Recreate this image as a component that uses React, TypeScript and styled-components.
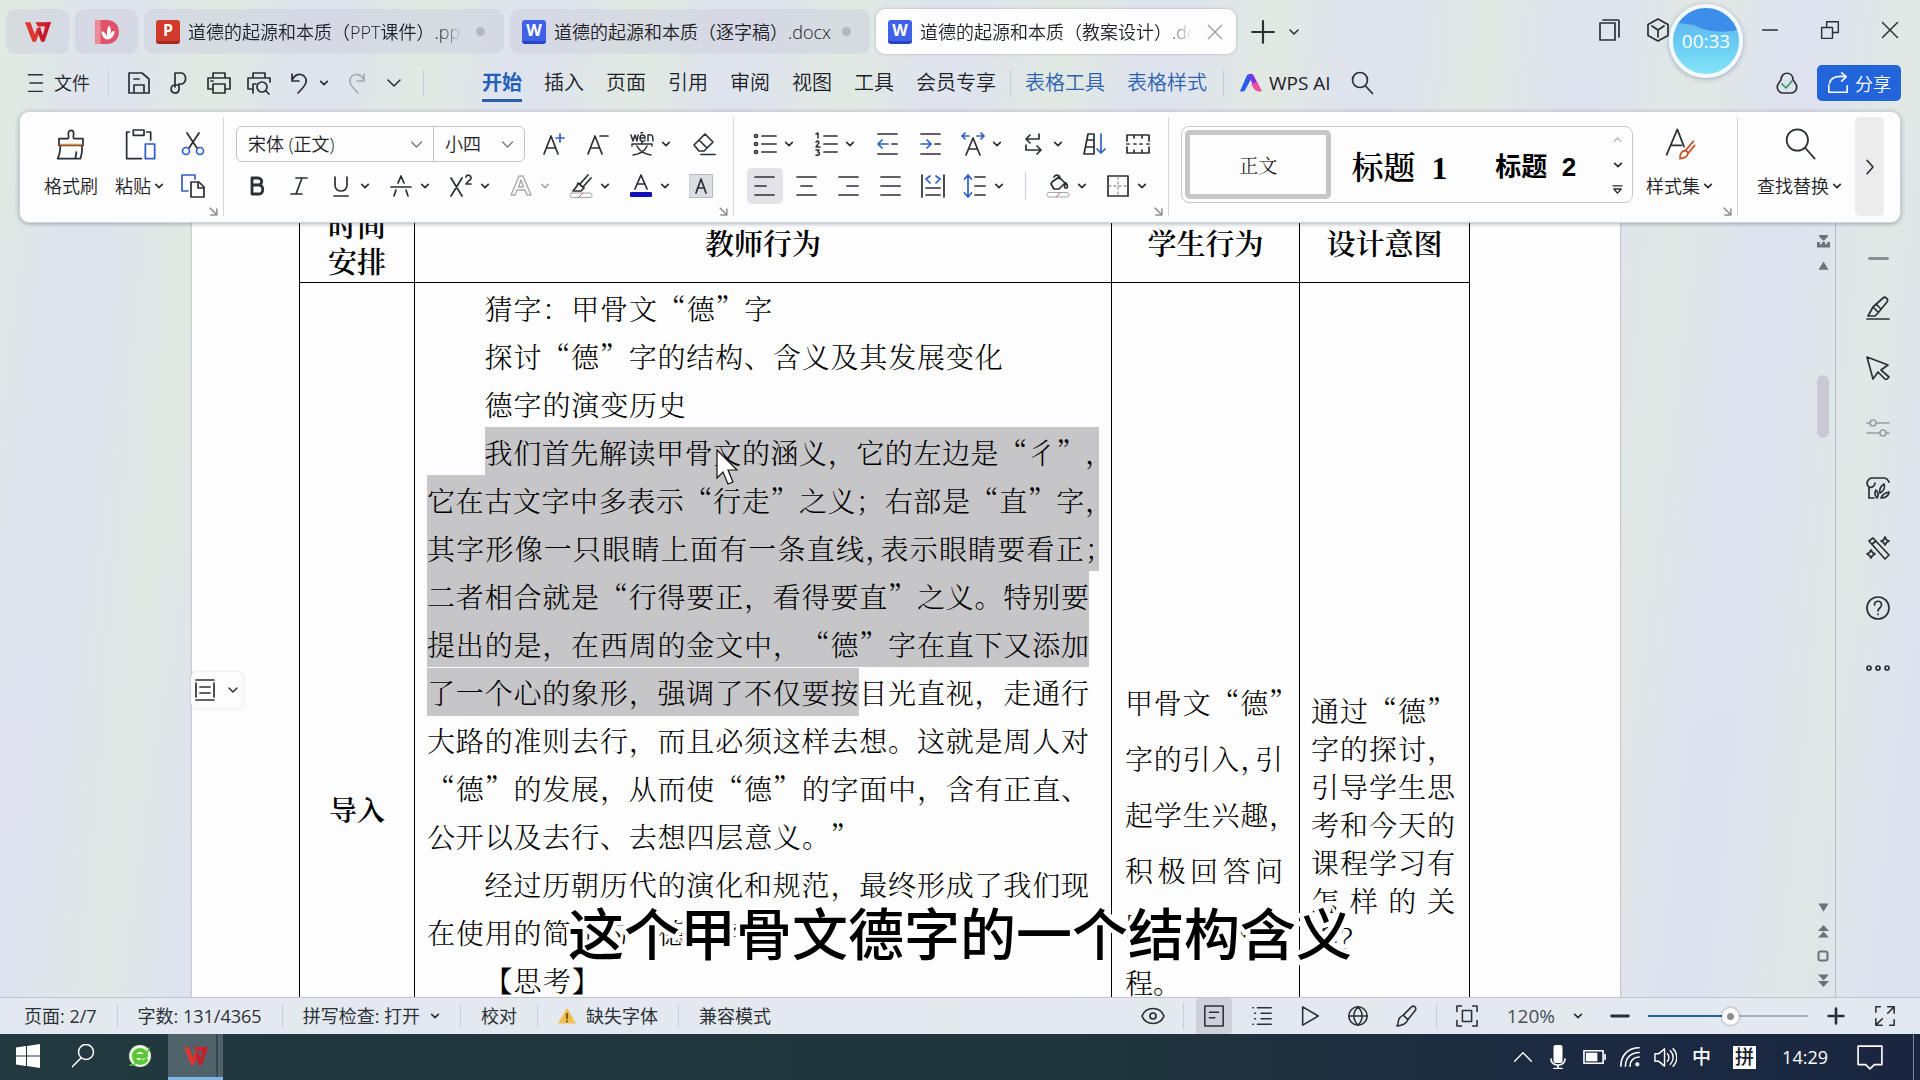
import React, { ReactNode } from "react";
import styled, { createGlobalStyle, css } from "styled-components";

const ui = `"Open Sans", "Noto Sans", "Noto Sans CJK SC", sans-serif`;
const song = `"Liberation Serif", "Noto Serif CJK SC", "Noto Sans CJK SC", serif`;
const cjk = `"Noto Serif CJK SC", "Noto Sans CJK SC", serif`;

const ink = "#2b2f36";
const blue = "#2f5fc4";
const pale = "#a9abb0";

const GlobalStyle = createGlobalStyle`
  *, *::before, *::after { box-sizing: border-box; }
  html, body, #root { height: 100%; }
  body { margin: 0; font-family: ${ui}; font-weight: 350; color: #1d2026; overflow: hidden; }
  button, input, select { font: inherit; color: inherit; }
  button { border: 0; padding: 0; background: none; cursor: pointer; }
`;

const Screen = styled.div`
  position: relative;
  display: flex;
  flex-direction: column;
  height: 100vh;
  background:
    repeating-linear-gradient(97deg, rgba(226, 238, 216, 0.35) 0 20px, rgba(221, 224, 244, 0.35) 90px 130px, rgba(226, 238, 216, 0.35) 210px),
    linear-gradient(160deg, #dfe7e8, #e0e4ec 50%, #dfe3ee);
`;

/* ---------- icons ---------- */

const Svg = styled.svg<{ $s: number; $c?: string }>`
  display: block;
  flex: none;
  width: ${(p) => p.$s}px;
  height: ${(p) => p.$s}px;
  fill: none;
  stroke: ${(p) => p.$c ?? ink};
  stroke-width: 1.7;
  stroke-linecap: round;
  stroke-linejoin: round;
`;

const Ico = ({ s = 24, c, children }: { s?: number; c?: string; children: ReactNode }) => (
  <Svg viewBox="0 0 24 24" $s={s} $c={c} aria-hidden="true">{children}</Svg>
);

const Chev = ({ s = 10, c, w = 4 }: { s?: number; c?: string; w?: number }) => (
  <Ico s={s} c={c}><path strokeWidth={w} d="M4 8l8 8 8-8" /></Ico>
);

const LogoW = ({ s = 26 }: { s?: number }) => (
  <Ico s={s} c="none">
    <path fill="#d3202f" d="M0 3h24l-1.500 4H12L9.500 3H0z" />
    <path fill="#e0342f" d="M0 3h5l4 11 2-6h4L10 21H7z" />
    <path fill="#c81c2c" d="M19.500 3H24l-6 18h-3L11.500 12l2-5 3 8z" />
  </Ico>
);

const FileBadge = styled.span<{ $c: string; $foot: string }>`
  display: grid;
  place-items: center;
  flex: none;
  width: 24px;
  height: 24px;
  border-radius: 3px;
  border-bottom: 3px solid ${(p) => p.$foot};
  background: ${(p) => p.$c};
  color: #fff;
  font-weight: 700;
  font-size: 16px;
  line-height: 20px;
`;

/* ---------- tab strip ---------- */

const TabStrip = styled.header`
  display: flex;
  align-items: center;
  gap: 6px;
  height: 63px;
  padding: 0 20px 0 6px;
`;

const tabBase = css`
  display: flex;
  align-items: center;
  height: 45px;
  border-radius: 9px;
  background: rgba(205, 208, 222, 0.55);
`;

const AppTab = styled.button`
  ${tabBase}
  flex: 0 0 63px;
  justify-content: center;
`;

const DocTab = styled.div<{ $active?: boolean }>`
  ${tabBase}
  flex: 0 1 360px;
  min-width: 0;
  gap: 8px;
  padding: 0 12px;
  ${(p) => p.$active && css`
    background: #fdfdfe;
    box-shadow: 0 0 3px rgba(90, 100, 130, 0.4);
  `}
`;

const TabTitle = styled.span<{ $fade?: boolean }>`
  flex: 1 1 0;
  min-width: 0;
  overflow: hidden;
  white-space: nowrap;
  font-size: 18px;
  line-height: 28px;
  ${(p) => p.$fade && css`mask-image: linear-gradient(90deg, #000 90%, transparent 98%);`}
`;

const Dot = styled.span`
  flex: none;
  width: 9px;
  height: 9px;
  margin-right: 7px;
  border-radius: 50%;
  background: #b4b7c4;
`;

const TabClose = styled.button`
  flex: none;
`;

const StripButtons = styled.div`
  display: flex;
  align-items: center;
  gap: 12px;
  padding-left: 8px;
`;

const WindowTools = styled.div`
  display: flex;
  align-items: center;
  margin-left: auto;
  padding-bottom: 4px;
  gap: 24px;
`;

const WindowControls = styled.div`
  display: flex;
  align-items: center;
  gap: 40px;
  margin-left: 66px;
`;

const Timer = styled.div`
  position: absolute;
  z-index: 5;
  top: 4px;
  right: 177px;
  display: grid;
  place-items: center;
  width: 74px;
  height: 74px;
  border: 4px solid #f2f8fc;
  border-radius: 50%;
  background:
    radial-gradient(ellipse 34px 16px at 74% 12%, #3d8eea 96%, transparent),
    radial-gradient(ellipse 44px 16px at 40% 2%, #3d8eea 94%, transparent),
    linear-gradient(#64b8f0 20%, #66c9f3 50%, #86e4f8);
  box-shadow: 0 1px 5px rgba(60, 90, 140, 0.45);
  color: #fff;
  font-size: 19px;
  font-weight: 400;
`;

/* ---------- menu row ---------- */

const MenuBar = styled.nav`
  display: flex;
  align-items: center;
  height: 48px;
  padding: 0 19px 8px 25px;
`;

const FileButton = styled.button`
  display: flex;
  align-items: center;
  gap: 9px;
  font-size: 18px;
  line-height: 28px;
`;

const Rule = styled.span<{ $h?: number; $m?: number }>`
  flex: none;
  width: 1px;
  height: ${(p) => p.$h ?? 26}px;
  margin: 0 ${(p) => p.$m ?? 18}px;
  background: #c9ccd6;
`;

const QuickTools = styled.div`
  display: flex;
  align-items: center;
  gap: 16px;
`;

const UndoButton = styled.button`
  display: flex;
  align-items: center;
  gap: 8px;
`;

const MenuTabs = styled.div<{ $first?: boolean }>`
  display: flex;
  align-items: center;
  gap: 22px;
  margin-left: ${(p) => (p.$first ? 38 : 0)}px;
`;

const MenuTab = styled.button<{ $kind?: "active" | "context" }>`
  height: 38px;
  border-bottom: 3px solid transparent;
  padding-top: 2px;
  font-size: 20px;
  line-height: 32px;
  white-space: nowrap;
  ${(p) => p.$kind === "active" && css`
    border-color: #2b5fae;
    color: #2460b8;
    font-weight: 700;
  `}
  ${(p) => p.$kind === "context" && css`color: #2c62ae;`}
`;

const AiButton = styled.button`
  display: flex;
  align-items: center;
  gap: 7px;
  margin-right: 19px;
  font-size: 19px;
  font-weight: 400;
`;

const MenuEnd = styled.div`
  display: flex;
  align-items: center;
  gap: 18px;
  margin-left: auto;
`;

const ShareButton = styled.button`
  display: flex;
  align-items: center;
  gap: 6px;
  height: 36px;
  padding: 0 10px;
  border-radius: 5px;
  background: #2264d9;
  color: #fff;
  font-size: 18px;
`;

/* ---------- ribbon ---------- */

const Ribbon = styled.section`
  position: relative;
  z-index: 3;
  display: flex;
  flex: none;
  height: 112px;
  margin: 0 19px;
  border: 1px solid #cfd3dc;
  border-radius: 10px;
  background: #fdfdfd;
  box-shadow: 0 1px 4px rgba(80, 90, 110, 0.45);
`;

const Group = styled.div<{ $pad: string; $gap?: number; $grow?: boolean; $last?: boolean }>`
  position: relative;
  display: flex;
  flex: ${(p) => (p.$grow ? "1 1 0" : "none")};
  gap: ${(p) => p.$gap ?? 0}px;
  min-width: 0;
  margin: 5px 0 6px;
  padding: ${(p) => p.$pad};
  border-right: ${(p) => (p.$last ? "0" : "1px solid #d5d7da")};
`;

const Rows = styled.div`
  display: grid;
  grid-auto-rows: 36px;
  row-gap: 6px;
  padding-top: 9px;
`;

const Row = styled.div<{ $gap?: number }>`
  display: flex;
  align-items: center;
  gap: ${(p) => p.$gap ?? 0}px;
`;

const Tool = styled.button<{ $active?: boolean }>`
  display: grid;
  place-items: center;
  width: 36px;
  height: 36px;
  margin: 0 3px;
  border-radius: 5px;
  background: ${(p) => (p.$active ? "#e2e2e8" : "none")};
`;

const SplitTool = styled.button`
  display: flex;
  align-items: center;
  gap: 7px;
  width: 60px;
  height: 36px;
  padding-left: 9px;
`;

const BigTool = styled.button`
  display: grid;
  grid-template-rows: 36px 36px;
  row-gap: 6px;
  place-items: center;
  padding-top: 9px;
  font-size: 18px;
  white-space: nowrap;
`;

const BigLabel = styled.span`
  display: flex;
  align-items: center;
  gap: 3px;
  line-height: 36px;
`;

const SmallStack = styled.div`
  display: grid;
  grid-template-rows: 36px 36px;
  row-gap: 6px;
  place-items: center;
  padding-top: 9px;
`;

const LauncherButton = styled.button`
  position: absolute;
  right: 5px;
  bottom: 0;
`;

const Launcher = () => (
  <LauncherButton aria-label="更多设置">
    <Ico s={9} c="#8c8f94"><path strokeWidth="4" d="M3 3l17 17M21 5v16H5" /></Ico>
  </LauncherButton>
);

const Combo = styled.div`
  display: flex;
  width: 289px;
  height: 36px;
  margin-right: 6px;
  border: 1px solid #c3c5ca;
  border-radius: 6px;
`;

const ComboField = styled.label<{ $w: number }>`
  display: flex;
  align-items: center;
  flex: 0 0 ${(p) => p.$w}px;
  padding: 0 9px 0 11px;
  & + & { border-left: 1px solid #c3c5ca; }
`;

const Select = styled.select`
  flex: 1;
  min-width: 0;
  border: 0;
  padding: 0;
  appearance: none;
  background: none;
  font-size: 18px;
  line-height: 28px;
`;

const Gallery = styled.div`
  display: flex;
  align-items: center;
  flex: 1 1 0;
  height: 77px;
  margin-top: 9px;
  padding-left: 3px;
  border: 1px solid #c6c8cc;
  border-radius: 8px;
`;

const StyleCard = styled.button<{ $kind: "body" | "h1" | "h2" }>`
  flex: 1 1 0;
  height: 69px;
  font-family: ${song};
  white-space: pre;
  color: #000;
  ${(p) => p.$kind === "body" && css`
    border: 5px solid #c6c6c6;
    border-radius: 5px;
    font-size: 19px;
    font-weight: 300;
  `}
  ${(p) => p.$kind === "h1" && css`
    font-size: 32px;
    font-weight: 600;
  `}
  ${(p) => p.$kind === "h2" && css`
    font-family: "Liberation Sans", "Noto Sans CJK SC", sans-serif;
    font-size: 26px;
    font-weight: 700;
  `}
`;

const GalleryArrows = styled.div`
  display: grid;
  grid-auto-rows: 25px;
  place-items: center;
  width: 28px;
`;

const ScrollRibbon = styled.button`
  display: grid;
  place-items: center;
  width: 29px;
  margin: 5px 16px 6px 0;
  border-radius: 5px;
  background: #ececec;
`;

/* ---------- document ---------- */

const Workspace = styled.main`
  display: flex;
  flex: 1 1 0;
  min-height: 0;
`;

const Canvas = styled.div`
  position: relative;
  flex: 1 1 0;
  min-width: 0;
  padding-left: 192px;
  overflow: hidden;
`;

const Paper = styled.article`
  width: 1428px;
  max-width: 100%;
  margin-top: -20px;
  padding: 0 151px 0 107px;
  background: #fdfdfd;
  box-shadow: 0 0 2px rgba(90, 100, 120, 0.6);
`;

const LessonTable = styled.table`
  width: 100%;
  table-layout: fixed;
  border-collapse: collapse;
  font-family: ${cjk};
  font-size: 28px;
  font-weight: 350;
  color: #000;
  text-spacing-trim: space-all;
`;

const Col = styled.col<{ $w: string }>`
  width: ${(p) => p.$w};
`;

const Th = styled.th`
  height: 79px;
  padding: 0;
  border: 1px solid #000;
  font-size: 29px;
  font-weight: 600;
  line-height: 36px;
`;

const Td = styled.td<{ $pad: string; $top?: boolean }>`
  height: 1084px;
  padding: ${(p) => p.$pad};
  border: 1px solid #000;
  vertical-align: ${(p) => (p.$top ? "top" : "middle")};
`;

const Stage = styled.div`
  font-size: 28px;
  font-weight: 600;
  text-align: center;
`;

/* The page grid holds 23 characters to a line; $chars is how many of them a short line fills. */
const Line = styled.div<{ $lh: number; $full?: boolean; $chars?: number; $indent?: boolean; $hang?: boolean; $sel?: boolean }>`
  height: ${(p) => p.$lh}px;
  width: ${(p) => (p.$chars ? `calc(100% * ${p.$chars} / 23)` : "auto")};
  margin-left: ${(p) => (p.$indent ? "calc(100% * 2 / 23)" : "0")};
  margin-right: ${(p) => (p.$hang ? -10 : 0)}px;
  line-height: ${(p) => p.$lh + 2}px;
  white-space: nowrap;
  text-align-last: ${(p) => (p.$full || p.$chars ? "justify" : "left")};
  background: ${(p) => (p.$sel ? "#c6c6c8" : "none")};
`;

const Selected = styled.span`
  padding: 4px 0;
  background: #c6c6c8;
`;

const Half = styled.span`
  font-feature-settings: "halt";
`;

const Pointer = styled.div`
  position: absolute;
  top: 226px;
  left: 715px;
`;

const LayoutHandle = styled.button`
  position: absolute;
  top: 449px;
  left: 191px;
  display: flex;
  align-items: center;
  gap: 10px;
  height: 36px;
  padding: 0 4px 0 2px;
  border-radius: 5px;
  background: #fdfdfe;
  box-shadow: 0 0 2px rgba(90, 100, 120, 0.35);
`;

const ScrollTrack = styled.div`
  display: flex;
  flex-direction: column;
  align-items: center;
  gap: 12px;
  width: 25px;
  padding: 12px 0 10px;
  border-right: 1px solid #b9bdc8;
`;

const Thumb = styled.div`
  width: 12px;
  height: 63px;
  margin: 92px 0 auto;
  border-radius: 6px;
  background: #c9cad6;
`;

const SideBar = styled.aside`
  display: flex;
  flex-direction: column;
  align-items: center;
  gap: 36px;
  width: 84px;
  padding-top: 34px;
`;

const Grip = styled.span`
  width: 21px;
  height: 3px;
  border-radius: 2px;
  background: #8b8e98;
`;

const Caption = styled.p`
  position: absolute;
  z-index: 4;
  left: 0;
  right: 0;
  bottom: 107px;
  margin: 0;
  text-align: center;
  font-family: "Noto Sans CJK SC", sans-serif;
  font-size: 56px;
  font-weight: 500;
  line-height: 84px;
  color: #000;
  -webkit-text-stroke: 9px #fdfdfd;
  paint-order: stroke fill;
  pointer-events: none;
`;

/* ---------- status bar ---------- */

const StatusBar = styled.footer`
  display: flex;
  align-items: center;
  flex: none;
  height: 37px;
  padding: 0 24px 0 4px;
  border-top: 1px solid #bfc5ce;
  background: rgba(228, 234, 240, 0.8);
  font-size: 18px;
  color: #2d3138;
`;

const StatusItem = styled.button`
  display: flex;
  align-items: center;
  gap: 10px;
  padding: 0 20px;
  line-height: 24px;
  font-weight: 400;
  white-space: nowrap;
  & + & { border-left: 1px solid #c9cdd6; }
`;

const StatusEnd = styled.div`
  display: flex;
  align-items: center;
  margin-left: auto;
`;

const ViewButton = styled.button<{ $active?: boolean }>`
  display: grid;
  place-items: center;
  width: 36px;
  height: 36px;
  margin: 0 6px;
  border-radius: 4px;
  background: ${(p) => (p.$active ? "#ced2d8" : "none")};
`;

const ZoomValue = styled.button`
  display: flex;
  align-items: center;
  gap: 18px;
  margin: 0 27px 0 16px;
  font-size: 19px;
  font-weight: 400;
  color: #4a4e56;
`;

const Slider = styled.input`
  width: 160px;
  height: 20px;
  margin: 0 19px 0 18px;
  appearance: none;
  background: linear-gradient(90deg, #2c5f9e 52%, #a9afb8 52%) center / 100% 2px no-repeat;
  &::-webkit-slider-thumb {
    appearance: none;
    width: 17px;
    height: 17px;
    border: 5px solid #fff;
    border-radius: 50%;
    background: #8c8c90;
    box-shadow: 0 0 3px rgba(0, 0, 0, 0.4);
  }
`;

const FullscreenButton = styled.button`
  margin-left: 29px;
`;

/* ---------- taskbar ---------- */

const TaskBar = styled.div`
  display: flex;
  align-items: stretch;
  flex: none;
  height: 46px;
  background: linear-gradient(90deg, #22393f, #20353c 55%, #1b2941 85%, #1a2640);
  color: #fff;
`;

const TaskButton = styled.button<{ $active?: boolean }>`
  display: grid;
  place-items: center;
  width: ${(p) => (p.$active ? 55 : 56)}px;
  border-bottom: 3px solid ${(p) => (p.$active ? "#7fb6e6" : "transparent")};
  background: ${(p) => (p.$active ? "linear-gradient(90deg, #51636a 48px, #34484f 48px 50px, #51636a 50px)" : "none")};
`;

const Tray = styled.div`
  display: flex;
  align-items: center;
  gap: 13px;
  margin-left: auto;
  padding-right: 30px;
  border-right: 1px solid #7d8596;
  margin-right: 6px;
`;

const Ime = styled.span<{ $boxed?: boolean }>`
  width: 23px;
  margin-right: 3px;
  font-size: 19px;
  font-weight: 500;
  line-height: 23px;
  text-align: center;
  ${(p) => p.$boxed && css`
    margin-left: 4px;
    background: #fff;
    color: #16202e;
  `}
`;

const Clock = styled.time`
  margin: 0 16px 0 10px;
  font-size: 18px;
  font-weight: 400;
`;

/* ---------- data ---------- */

type L = { t: ReactNode; full?: boolean; chars?: number; indent?: boolean; hang?: boolean; sel?: boolean };

const teacher: L[] = [
  { t: "猜字：甲骨文“德”字", indent: true, chars: 10 },
  { t: "探讨“德”字的结构、含义及其发展变化", indent: true, chars: 18 },
  { t: "德字的演变历史", indent: true, chars: 7 },
  { t: <>我们首先解读甲骨文的涵义，它的左边是“彳”<Half>，</Half></>, indent: true, full: true, hang: true, sel: true },
  { t: <>它在古文字中多表示“行走”之义；右部是“直”字<Half>，</Half></>, full: true, hang: true, sel: true },
  { t: <>其字形像一只眼睛上面有一条直线<Half>，</Half>表示眼睛要看正<Half>；</Half></>, full: true, hang: true, sel: true },
  { t: "二者相合就是“行得要正，看得要直”之义。特别要", full: true, sel: true },
  { t: "提出的是，在西周的金文中，“德”字在直下又添加", full: true, sel: true },
  { t: <><Selected>了一个心的象形，强调了不仅要按</Selected>目光直视，走通行</>, full: true },
  { t: "大路的准则去行，而且必须这样去想。这就是周人对", full: true },
  { t: "“德”的发展，从而使“德”的字面中，含有正直、", full: true },
  { t: "公开以及去行、去想四层意义。”", chars: 15 },
  { t: "经过历朝历代的演化和规范，最终形成了我们现", indent: true, full: true },
  { t: "在使用的简体的“德”字。", chars: 12 },
  { t: "【思考】", indent: true, chars: 4 },
];

const student: L[] = [
  { t: <>甲骨文“德<Half>”</Half></>, full: true },
  { t: <>字的引入<Half>，</Half>引</>, full: true },
  { t: <>起学生兴趣<Half>，</Half></>, full: true },
  { t: "积极回答问", full: true },
  { t: "题，进入课", full: true },
  { t: "程。" },
];

const intent: L[] = [
  { t: "通过“德”", full: true },
  { t: "字的探讨，", full: true },
  { t: "引导学生思", full: true },
  { t: "考和今天的", full: true },
  { t: "课程学习有", full: true },
  { t: "怎样的关", full: true },
  { t: "系？" },
];

const Lines = ({ items, lh = 48 }: { items: L[]; lh?: number }) => (
  <>
    {items.map((l, i) => (
      <Line key={i} $lh={lh} $full={l.full} $chars={l.chars} $indent={l.indent} $hang={l.hang} $sel={l.sel}>{l.t}</Line>
    ))}
  </>
);

const menu = ["插入", "页面", "引用", "审阅", "视图", "工具", "会员专享"];

const Split = ({ label, children, c }: { label: string; children: ReactNode; c?: string }) => (
  <SplitTool aria-label={label}>{children}<Chev c={c} /></SplitTool>
);

export default function App() {
  return (
    <Screen lang="zh-CN">
      <GlobalStyle />
      <TabStrip>
        <AppTab aria-label="WPS"><LogoW /></AppTab>
        <AppTab aria-label="稻壳">
          <Ico s={26} c="none">
            <path fill="#e0526a" d="M1 1h11c7 0 11 5 11 11s-4 11-11 11H1z" />
            <path fill="#ee8a9b" d="M1 1h5v22H1z" />
            <path fill="#fff" d="M12 19C7 17 7 13 7 11c3 1 4 3 5 5 0-4 0-8 2-10 2 3 2 5 1 8 1-2 2-3 4-3 0 4-2 7-7 8z" />
          </Ico>
        </AppTab>
        <DocTab>
          <FileBadge $c="#d23a2b" $foot="#a32a20">P</FileBadge>
          <TabTitle $fade>道德的起源和本质（PPT课件）.pptx</TabTitle>
          <Dot />
        </DocTab>
        <DocTab>
          <FileBadge $c="#3f62e8" $foot="#2747c0">W</FileBadge>
          <TabTitle>道德的起源和本质（逐字稿）.docx</TabTitle>
          <Dot />
        </DocTab>
        <DocTab $active>
          <FileBadge $c="#3f62e8" $foot="#2747c0">W</FileBadge>
          <TabTitle $fade>道德的起源和本质（教案设计）.docx</TabTitle>
          <TabClose aria-label="关闭标签"><Ico s={18} c="#999ca3"><path d="M3 3l18 18M21 3L3 21" /></Ico></TabClose>
        </DocTab>
        <StripButtons>
          <button aria-label="新建标签"><Ico s={26}><path strokeWidth="2" d="M12 2v20M2 12h20" /></Ico></button>
          <button aria-label="标签列表"><Chev s={12} w={3} /></button>
        </StripButtons>
        <WindowTools>
          <button aria-label="窗口"><Ico s={24}><path d="M2 5h15v17H2zM5 2h15a1 1 0 0 1 1 1v16" /></Ico></button>
          <button aria-label="应用"><Ico s={24}><path d="M12 1l10 5.500v11L12 23 2 17.500v-11zM6 8l6 4 6-4M12 12v7" /></Ico></button>
          <WindowControls>
            <button aria-label="最小化"><Ico s={20}><path d="M3 12h18" /></Ico></button>
            <button aria-label="还原"><Ico s={20}><path d="M2 9h13v13H2zM8 9V2h14v13h-7" /></Ico></button>
            <button aria-label="关闭"><Ico s={20}><path d="M3 3l18 18M21 3L3 21" /></Ico></button>
          </WindowControls>
        </WindowTools>
      </TabStrip>
      <Timer>00:33</Timer>

      <MenuBar>
        <FileButton>
          <Ico s={20}><path d="M4 2h17M6 12h15M4 22h17" /></Ico>
          文件
        </FileButton>
        <Rule />
        <QuickTools>
          <button aria-label="保存"><Ico><path d="M2 2h13l7 6v14H2zM7 22v-8h10v8M7 8h5" /></Ico></button>
          <button aria-label="输出"><Ico><path d="M8 16V2h7a6 6 0 0 1 0 11h-3v6a4 4 0 1 1-4-5h4" /></Ico></button>
          <button aria-label="打印"><Ico><path d="M6 7V2h12v5M5 18H1V7h22v11h-4M6 13h12v9H6zM4 10h2" /></Ico></button>
          <button aria-label="打印预览"><Ico><path d="M6 7V2h12v5M5 18H1V7h22v4M6 22V13h3" /><circle cx="15" cy="16" r="5" /><path d="M19 20l3 3" /></Ico></button>
          <UndoButton aria-label="撤销"><Ico><path d="M5 3v7h7M5 9c3-6 8-7 12-4 5 5 1 10-6 17" /></Ico><Chev /></UndoButton>
          <button aria-label="重做"><Ico c={pale}><path d="M19 3v7h-7M19 9c-3-6-8-7-12-4-5 5-1 10 6 17" /></Ico></button>
          <button aria-label="更多"><Chev s={18} w={2} /></button>
        </QuickTools>
        <Rule $m={20} />
        <MenuTabs $first>
          <MenuTab $kind="active">开始</MenuTab>
          {menu.map((m) => <MenuTab key={m}>{m}</MenuTab>)}
        </MenuTabs>
        <Rule $m={14} />
        <MenuTabs>
          <MenuTab $kind="context">表格工具</MenuTab>
          <MenuTab $kind="context">表格样式</MenuTab>
        </MenuTabs>
        <Rule $m={16} />
        <AiButton>
          <Ico s={22} c="none">
            <path fill="#2c5bf0" d="M0 21L7 5c1-3 5-4 7-1L6 19c-1 2-3 3-6 2z" />
            <path fill="#7a35e8" d="M9 3c3-2 5-1 6 1l5 10-5 2z" />
            <path fill="#ee4f9a" d="M12 13l7-2 5 10c-4 1-6 0-8-2z" />
          </Ico>
          WPS AI
        </AiButton>
        <button aria-label="搜索"><Ico><circle cx="10" cy="9" r="7.500" /><path d="M15.500 15l7 7.500" /></Ico></button>
        <MenuEnd>
          <Ico><path d="M7 22a6 6 0 0 1-3-10c0-1 1-2 2-3 0-9 12-9 12 0 1 1 2 2 2 3a6 6 0 0 1-3 10z" /><path stroke="#2f9a63" d="M7 13l4 4 6-7" /></Ico>
          <ShareButton>
            <Ico s={22} c="#fff"><path d="M2 14v8h20v-7M3 12c1-6 7-8 17-7M16 1l5 4-5 5" /></Ico>
            分享
          </ShareButton>
        </MenuEnd>
      </MenuBar>

      <Ribbon>
        <Group $pad="0 18px 0 24px" $gap={17}>
          <BigTool>
            <Ico s={32}><path strokeWidth="1.300" d="M3 8h6c2 0 1-2 1-4 0-3 4-3 4 0 0 2-1 4 1 4h6v5H3zM4 13c0 4 0 6-2 10h17c1-3 2-6 1-10M15 23c1-2 1-3 1-5" /><path stroke="#e08a3c" strokeWidth="1.300" d="M4 12.500h16" /></Ico>
            <BigLabel>格式刷</BigLabel>
          </BigTool>
          <BigTool>
            <Ico s={32}><path strokeWidth="1.300" d="M4 3H2v20h11M17 3h3v6M7 1.500h8v4H7z" /><path stroke={blue} strokeWidth="1.300" d="M16 12h7v11h-7z" /></Ico>
            <BigLabel>粘贴<Chev /></BigLabel>
          </BigTool>
          <SmallStack>
            <button aria-label="剪切"><Ico><path d="M6 1l10 15M18 1L8 16" /><circle cx="5" cy="19" r="3.500" stroke={blue} /><circle cx="19" cy="19" r="3.500" stroke={blue} /></Ico></button>
            <button aria-label="复制"><Ico><path stroke={blue} d="M7 17H1V1h13v4" /><path d="M10 8h8l5 5v10H10zM17 8v6h6" /></Ico></button>
          </SmallStack>
          <Launcher />
        </Group>

        <Group $pad="0 8px 0 12px">
          <Rows>
            <Row $gap={2}>
              <Combo>
                <ComboField $w={196}>
                  <Select aria-label="字体"><option>宋体 (正文)</option></Select>
                  <Chev s={15} w={2} c="#777" />
                </ComboField>
                <ComboField $w={91}>
                  <Select aria-label="字号"><option>小四</option></Select>
                  <Chev s={15} w={2} c="#777" />
                </ComboField>
              </Combo>
              <Tool aria-label="增大字号"><Ico><path d="M2 22L9 4l7 18M4.500 16h9" /><path stroke={blue} d="M18 2v8M14 6h8" /></Ico></Tool>
              <Tool aria-label="减小字号"><Ico><path d="M2 22L9 4l7 18M4.500 16h9M14 4h8" /></Ico></Tool>
              <Split label="拼音指南"><Ico><path strokeWidth="1.500" d="M1 3l2 6 2-6 2 6 1-6M10 6h5c0-4-5-4-5 0 0 4 4 4 5 2M11 1l2-1M18 9V3c4-1 5 0 5 6M2 14V12h20v2M12 10v2M7 14c2 4 7 8 14 9M17 14c-2 5-7 8-14 9" /></Ico></Split>
              <Tool aria-label="清除格式"><Ico><path d="M2 13L13 2l8 8-9 9H7zM7 8l8 8M9 22.500h14" /></Ico></Tool>
            </Row>
            <Row>
              <Tool aria-label="加粗"><Ico><path strokeWidth="2.800" d="M7 4h6c5 0 5 7 0 7H7zM7 11h7c5 0 5 9 0 9H7z" /></Ico></Tool>
              <Tool aria-label="倾斜"><Ico><path d="M9 4h11M4 20h11M15 4L9 20" /></Ico></Tool>
              <Split label="下划线"><Ico><path d="M6 3v8c0 8 12 8 12 0V3M5 22h14" /></Ico></Split>
              <Split label="删除线"><Ico><path d="M2 13h20M9 9l3-7 3 7M7 16l-2 6M17 16l2 6" /></Ico></Split>
              <Split label="上标"><Ico><path d="M2 4l11 18M13 4L2 22M17 3c1-3 5-2 5 1 0 2-3 3-5 6h5" /></Ico></Split>
              <Split label="文字效果" c={pale}><Ico c={pale}><path strokeWidth="1.400" d="M2 21L10 2h4l8 19h-4l-2-5H8l-2 5zM9.500 13h5L12 6z" /></Ico></Split>
              <Split label="突出显示"><Ico><path d="M19 1l-8 9M22 4l-8 9M9 9l6 5-3 3H4l4-5z" /><rect x="1" y="19" width="22" height="4.500" rx="2" stroke="#a7a7ab" strokeWidth="1" /><path stroke="#d0607a" strokeWidth="1" d="M10 23l4-4" /></Ico></Split>
              <Split label="字体颜色"><Ico><path d="M6 15L12 1l6 14M8 10h8" /><rect x="1" y="18" width="22" height="5" rx="1" fill="#1310b5" stroke="none" /></Ico></Split>
              <Tool aria-label="字符底纹"><Ico><path fill="#dcdde2" stroke="#b9bac0" strokeWidth="1" d="M.5.5h23v23H.5z" /><path d="M7 19l5-14 5 14M8.500 14h7" /></Ico></Tool>
            </Row>
          </Rows>
          <Launcher />
        </Group>

        <Group $pad="0 9px 0 10px">
          <Rows>
            <Row $gap={1}>
              <Split label="项目符号"><Ico><path d="M9 4h14M9 12h14M9 20h14" /><circle cx="3" cy="4" r="1.500" /><circle cx="3" cy="12" r="1.500" /><circle cx="3" cy="20" r="1.500" /></Ico></Split>
              <Split label="编号"><Ico><path d="M10 4h13M10 12h13M10 20h13" /><path strokeWidth="1.500" d="M2 2l2-1v5M2 10c2-2 4 0 2 2l-2 3h4M2 18h3l-1 2c3 1 1 4-2 3" /></Ico></Split>
              <Tool aria-label="减少缩进"><Ico><path d="M3 2h19M3 22h19M17 12h5" /><path stroke={blue} d="M3 12h10M7 8l-4 4 4 4" /></Ico></Tool>
              <Tool aria-label="增加缩进"><Ico><path d="M3 2h19M3 22h19M17 12h5" /><path stroke={blue} d="M3 12h10M9 8l4 4-4 4" /></Ico></Tool>
              <Split label="中文版式"><Ico><path d="M5 23l7-17 7 17M8 17h8" /><path stroke={blue} d="M1 4h7M4 1L1 4l3 3M16 4h7M20 1l3 3-3 3" /></Ico></Split>
              <Split label="换行"><Ico><path d="M17 2v5H4M8 3L4 7l4 4M4 13v5h15M15 14l4 4-4 4" /></Ico></Split>
              <Tool aria-label="排序"><Ico><path d="M1 22L5 2h6v20zM3 15h8M4 8h7" /><path stroke={blue} d="M18 2v19M14 17l4 4 4-4" /></Ico></Tool>
              <Tool aria-label="制表位"><Ico><path d="M1 9V3h22v6M1 15v6h22v-6M8 3v3M16 3v3M8 21v-3M16 21v-3M1 12h2M8 12h2M14 12h2M21 12h2" /></Ico></Tool>
            </Row>
            <Row>
              <Tool $active aria-label="左对齐"><Ico><path d="M2 3h19M2 12h11M2 21h19" /></Ico></Tool>
              <Tool aria-label="居中"><Ico><path d="M2 3h19M6 12h11M2 21h19" /></Ico></Tool>
              <Tool aria-label="右对齐"><Ico><path d="M2 3h19M10 12h11M2 21h19" /></Ico></Tool>
              <Tool aria-label="两端对齐"><Ico><path d="M2 3h19M2 12h19M2 21h19" /></Ico></Tool>
              <Tool aria-label="分散对齐"><Ico><path d="M1 1v22M23 1v22M5 14h14M5 21h14" /><path stroke={blue} d="M9 2L5 5l4 4M15 2l4 3-4 4" /></Ico></Tool>
              <Split label="行距"><Ico><path d="M12 3h10M12 12h10M12 21h10" /><path stroke={blue} d="M5 1v22M1.500 5L5 1l3.500 4M1.500 19L5 23l3.500-4" /></Ico></Split>
              <Rule $h={28} $m={11} />
              <Split label="底纹"><Ico><path d="M8 3c2-3 6-2 6 2M6 8l7-5 6 6-6 6H8L5 10zM20 9c2 3 2 5 0 5s-2-2 0-5" /><rect x="1" y="18.500" width="22" height="4.500" rx="2" stroke="#a7a7ab" strokeWidth="1" /><path stroke="#d0607a" strokeWidth="1" d="M10 23l4-4" /></Ico></Split>
              <Split label="边框"><Ico><path d="M2 2h20v20H2z" /><path stroke="#999" strokeDasharray="2 3" strokeWidth="1.300" d="M12 3v18M3 12h18" /></Ico></Split>
            </Row>
          </Rows>
          <Launcher />
        </Group>

        <Group $pad="0 24px 0 12px" $gap={13} $grow>
          <Gallery>
            <StyleCard $kind="body">正文</StyleCard>
            <StyleCard $kind="h1">标题  1</StyleCard>
            <StyleCard $kind="h2">标题  2</StyleCard>
            <GalleryArrows>
              <button aria-label="上一行"><Ico s={9} c={pale}><path strokeWidth="3" d="M3 17l9-9 9 9" /></Ico></button>
              <button aria-label="下一行"><Chev /></button>
              <button aria-label="展开"><Ico s={11}><path strokeWidth="3" d="M2 4h20M4 11l8 9 8-9z" /></Ico></button>
            </GalleryArrows>
          </Gallery>
          <BigTool>
            <Ico s={32}><path strokeWidth="1.300" d="M2 20L10 1l5 13M5 13h8" /><path stroke="#c4532c" strokeWidth="1.300" d="M22 10l-6 7M23 13l-5 6M12 23c0-4 1-6 4-6 3 1 3 5-4 6z" /></Ico>
            <BigLabel>样式集<Chev /></BigLabel>
          </BigTool>
          <Launcher />
        </Group>

        <Group $pad="0 13px 0 19px" $last>
          <BigTool>
            <Ico s={32}><circle cx="10" cy="9" r="8" strokeWidth="1.300" /><path strokeWidth="1.300" d="M16 15l7 8" /></Ico>
            <BigLabel>查找替换<Chev /></BigLabel>
          </BigTool>
        </Group>
        <ScrollRibbon aria-label="向右滚动"><Ico s={18}><path strokeWidth="2.200" d="M8 3l8 9-8 9" /></Ico></ScrollRibbon>
      </Ribbon>

      <Workspace>
        <Canvas>
          <Paper>
            <LessonTable>
              <colgroup>
                <Col $w="115px" /><Col $w="697px" /><Col $w="188px" /><Col $w="170px" />
              </colgroup>
              <thead>
                <tr>
                  <Th>时间<br />安排</Th>
                  <Th>教师行为</Th>
                  <Th>学生行为</Th>
                  <Th>设计意图</Th>
                </tr>
              </thead>
              <tbody>
                <tr>
                  <Td $pad="0 0 32px"><Stage>导入</Stage></Td>
                  <Td $pad="0 22px 0 12px" $top><Lines items={teacher} /></Td>
                  <Td $pad="32px 16px 0 13px"><Lines items={student} lh={56} /></Td>
                  <Td $pad="0 14px 4px 11px"><Lines items={intent} lh={38} /></Td>
                </tr>
              </tbody>
            </LessonTable>
          </Paper>
          <LayoutHandle aria-label="段落布局">
            <Ico><path d="M3 2h18M3 22h18M3 5v14M21 5v14M7 9h10M7 15h10" /></Ico>
            <Chev s={12} w={3} />
          </LayoutHandle>
          <Pointer>
            <Svg viewBox="0 0 24 40" $s={40} aria-hidden="true">
              <path fill="#fff" stroke="#111" strokeWidth="1.200" strokeLinejoin="miter" d="M-6 1v28l6-6 5 12 5-2-5-12h9z" />
            </Svg>
          </Pointer>
        </Canvas>
        <ScrollTrack>
          <Ico s={13} c="none"><path fill="#6d717c" d="M4 0h16v3l-8 8-8-8zM0 13h5v4h4v-4h6v4h4v-4h5v10H0z" /></Ico>
          <Ico s={11} c="none"><path fill="#6d717c" d="M12 3l11 18H1z" /></Ico>
          <Thumb />
          <Ico s={11} c="none"><path fill="#6d717c" d="M12 21L1 3h22z" /></Ico>
          <Ico s={13} c="none"><path fill="#6d717c" d="M12 0l10 11H2zM12 12l10 11H2z" /></Ico>
          <Ico s={12} c="#6d717c"><rect x="3" y="3" width="18" height="18" rx="4" strokeWidth="4" /></Ico>
          <Ico s={13} c="none"><path fill="#6d717c" d="M12 12L2 1h20zM12 24L2 13h20z" /></Ico>
        </ScrollTrack>
        <SideBar>
          <Grip />
          <Ico><path d="M1 23h22M2 20l5-9L17 2c2-2 6 1 4 4l-9 11-3 3zM7 11l5 5M10 8l5 5" /></Ico>
          <Ico><path d="M1 1l21 8-7 5 8 7-3 3-8-8-5 7z" /></Ico>
          <Ico c="#9a9da6"><path d="M1 7h3M10 7h13M1 17h13M20 17h3" /><circle cx="7" cy="7" r="3" /><circle cx="17" cy="17" r="3" /></Ico>
          <Ico><path d="M8 22H3V11C-1 8 2 2 6 2h12c3 0 4 2 5 4M3 11c3 1 6-1 6-4M11 22c-3-3-2-6-1-8 2 2 3 5 1 8zM14 17c-1-4 1-7 4-9 1 3 0 7-4 9zM15 22c1-3 4-5 8-6 0 4-4 6-8 6z" /></Ico>
          <Ico><path d="M3 5l4-3 16 17-4 4zM6 8l4-3M19 1l1.500 3L23 5l-2.500 1.500L19 9l-1.500-2.500L15 5l2.500-1zM5 14l1.500 2.500L9 18l-2.500 1.500L5 22l-1.500-2.500L1 18l2.500-1.500z" /></Ico>
          <Ico><circle cx="12" cy="12" r="11" /><path d="M8.500 9c0-5 7-5 7 0 0 3-3.500 3-3.500 6M12 18v.5" /></Ico>
          <Ico><circle cx="3" cy="12" r="2" /><circle cx="12" cy="12" r="2" /><circle cx="21" cy="12" r="2" /></Ico>
        </SideBar>
      </Workspace>

      <Caption>这个甲骨文德字的一个结构含义</Caption>

      <StatusBar>
        <StatusItem>页面: 2/7</StatusItem>
        <StatusItem>字数: 131/4365</StatusItem>
        <StatusItem>拼写检查: 打开 <Chev /></StatusItem>
        <StatusItem>校对</StatusItem>
        <StatusItem>
          <Ico s={18} c="none"><path fill="#f0c050" d="M12 1l12 21H0z" /><path stroke="#8a5a10" strokeWidth="3" d="M12 9v6M12 19v.3" /></Ico>
          缺失字体
        </StatusItem>
        <StatusItem>兼容模式</StatusItem>
        <StatusEnd>
          <ViewButton aria-label="护眼"><Ico><path d="M1 12C5 2 19 2 23 12 19 22 5 22 1 12z" /><circle cx="12" cy="12" r="3" /></Ico></ViewButton>
          <Rule $m={6} />
          <ViewButton $active aria-label="页面视图"><Ico s={22}><path d="M2 1h20v22H2zM7 8h10M7 14h6" /></Ico></ViewButton>
          <ViewButton aria-label="大纲"><Ico s={22}><path d="M7 3h15M11 9h11M11 15h11M7 21h15M2 3h.5M4 9h1M4 15h1M2 21h.5" /></Ico></ViewButton>
          <ViewButton aria-label="阅读"><Ico s={22}><path d="M4 2l17 10L4 22z" /></Ico></ViewButton>
          <ViewButton aria-label="网页"><Ico s={22}><circle cx="12" cy="12" r="10" /><path d="M2 12h20M12 2c-6 6-6 14 0 20M12 2c6 6 6 14 0 20" /></Ico></ViewButton>
          <ViewButton aria-label="书写"><Ico s={22}><path d="M9 11l9-9c3-2 6 1 4 4l-8 10zM9 11l5 5c-2 5-6 6-12 7 2-2 1-4 2-7 1-3 3-4 5-5z" /></Ico></ViewButton>
          <Rule $m={6} />
          <ViewButton aria-label="适合页面"><Ico s={22}><path d="M1 7V1h5M18 1h5v6M1 17v6h5M18 23h5v-6M7 6h10v12H7z" /></Ico></ViewButton>
          <ZoomValue>120% <Chev /></ZoomValue>
          <button aria-label="缩小"><Ico s={20}><path strokeWidth="3.500" d="M2 12h20" /></Ico></button>
          <Slider type="range" min={0} max={100} defaultValue={52} aria-label="缩放" />
          <button aria-label="放大"><Ico s={18}><path strokeWidth="3.500" d="M12 2v20M2 12h20" /></Ico></button>
          <FullscreenButton aria-label="全屏"><Ico s={22}><path d="M2 8V2h5M15 2h7v7M22 2l-7 7M22 16v6h-5M9 22H2v-7M2 22l7-7" /></Ico></FullscreenButton>
        </StatusEnd>
      </StatusBar>

      <TaskBar>
        <TaskButton aria-label="开始菜单"><Ico c="none"><path fill="#fff" d="M0 3.500l10-1.500v9.500H0zM11 2l13-2v11.500H11zM0 12.500h10V22L0 20.500zM11 12.500h13V24l-13-2z" /></Ico></TaskButton>
        <TaskButton aria-label="搜索"><Ico c="#fff"><circle cx="14" cy="8" r="7.500" strokeWidth="1.500" /><path strokeWidth="1.500" d="M9 14l-9 9" /></Ico></TaskButton>
        <TaskButton aria-label="浏览器">
          <Ico c="none"><circle cx="12" cy="12" r="11" fill="#e8f7dc" /><path fill="none" stroke="#5cc63a" strokeWidth="4" d="M6 12h12c0-8-12-8-12 0s9 8 12 4" /><path stroke="#5cc63a" strokeWidth="1.500" d="M2 21C8 22 19 12 21 4" /></Ico>
        </TaskButton>
        <TaskButton $active aria-label="WPS"><LogoW s={24} /></TaskButton>
        <Tray>
          <Ico s={20} c="#fff"><path d="M2 17l10-10 10 10" /></Ico>
          <Ico s={24} c="#fff"><rect x="7.500" y="0" width="9" height="18" rx="2" fill="#fff" stroke="none" /><path d="M5 14c0 8 14 8 14 0M12 20v3M8 23.500h8" /></Ico>
          <Ico s={23} c="#fff"><path d="M1 5h20v13H1zM23 9v5" /><path fill="#fff" stroke="none" d="M3 7h12v9H3z" /></Ico>
          <Ico s={22} c="#fff"><path d="M2 22C2 10 10 2 22 2M7 22C7 13 13 7 22 7M12 22c0-6 4-10 10-10" /><circle cx="20" cy="20" r="1.500" fill="#fff" /></Ico>
          <Ico s={23} c="#fff"><path strokeWidth="1.500" d="M1 8h4l6-5v18l-6-5H1zM14 8c2 2 2 6 0 8M17 5c4 4 4 10 0 14M20 3c5 5 5 13 0 18" /></Ico>
          <Ime>中</Ime>
          <Ime $boxed>拼</Ime>
          <Clock>14:29</Clock>
          <Ico s={26} c="#fff"><path strokeWidth="1.500" d="M1 2h22v17h-7l-4 4-4-4H1z" /></Ico>
        </Tray>
      </TaskBar>
    </Screen>
  );
}
